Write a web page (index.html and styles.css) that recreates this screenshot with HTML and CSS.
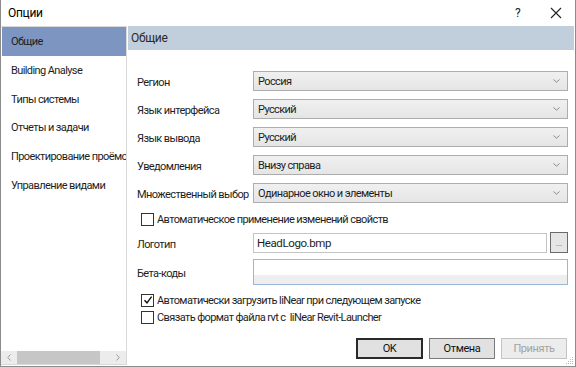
FILE: index.html
```html
<!DOCTYPE html>
<html lang="ru">
<head>
<meta charset="utf-8">
<title>Опции</title>
<link rel="stylesheet" href="styles.css">
</head>
<body>
<div class="window">
  <div class="titlebar">
    <span class="title">Опции</span>
    <span class="help">?</span>
    <span class="close"><svg width="12" height="12" viewBox="0 0 12 12"><path d="M1 1L11 11M11 1L1 11" stroke="#222" stroke-width="1.1" fill="none"/></svg></span>
  </div>
  <div class="main">
    <div class="nav">
      <ul class="nav-list">
        <li class="nav-item active">Общие</li>
        <li class="nav-item">Building Analyse</li>
        <li class="nav-item">Типы системы</li>
        <li class="nav-item">Отчеты и задачи</li>
        <li class="nav-item">Проектирование проёмов</li>
        <li class="nav-item">Управление видами</li>
      </ul>
      <div class="hscroll">
        <span class="sarrow"><svg width="4" height="7" viewBox="0 0 4 7"><path d="M3.5 0.5L0.8 3.5L3.5 6.5" stroke="#9a9a9a" fill="none"/></svg></span>
        <div class="track"><div class="thumb"></div></div>
        <span class="sarrow"><svg width="4" height="7" viewBox="0 0 4 7"><path d="M0.5 0.5L3.2 3.5L0.5 6.5" stroke="#9a9a9a" fill="none"/></svg></span>
      </div>
    </div>
    <div class="content">
      <div class="header">Общие</div>
      <div class="form">
        <div class="row">
          <span class="label">Регион</span>
          <div class="select"><span>Россия</span><svg class="chev" width="7" height="4" viewBox="0 0 7 4"><path d="M0.5 0.5L3.5 3.2L6.5 0.5" stroke="#8a8a8a" fill="none"/></svg></div>
        </div>
        <div class="row">
          <span class="label">Язык интерфейса</span>
          <div class="select"><span>Русский</span><svg class="chev" width="7" height="4" viewBox="0 0 7 4"><path d="M0.5 0.5L3.5 3.2L6.5 0.5" stroke="#8a8a8a" fill="none"/></svg></div>
        </div>
        <div class="row">
          <span class="label">Язык вывода</span>
          <div class="select"><span>Русский</span><svg class="chev" width="7" height="4" viewBox="0 0 7 4"><path d="M0.5 0.5L3.5 3.2L6.5 0.5" stroke="#8a8a8a" fill="none"/></svg></div>
        </div>
        <div class="row">
          <span class="label">Уведомления</span>
          <div class="select"><span>Внизу справа</span><svg class="chev" width="7" height="4" viewBox="0 0 7 4"><path d="M0.5 0.5L3.5 3.2L6.5 0.5" stroke="#8a8a8a" fill="none"/></svg></div>
        </div>
        <div class="row">
          <span class="label">Множественный выбор</span>
          <div class="select"><span>Одинарное окно и элементы</span><svg class="chev" width="7" height="4" viewBox="0 0 7 4"><path d="M0.5 0.5L3.5 3.2L6.5 0.5" stroke="#8a8a8a" fill="none"/></svg></div>
        </div>
        <label class="check first-check"><span class="box"></span>Автоматическое применение изменений свойств</label>
        <div class="row logo-row">
          <span class="label">Логотип</span>
          <div class="textbox">HeadLogo.bmp</div>
          <div class="browse">...</div>
        </div>
        <div class="row beta-row">
          <span class="label">Бета-коды</span>
          <div class="memo"><div class="memo-bar"></div></div>
        </div>
        <label class="check check-a"><span class="box"><svg width="10" height="10" viewBox="0 0 10 10"><path d="M1.5 5.2L4 7.8L8.6 1.6" stroke="#111" stroke-width="1.4" fill="none"/></svg></span>Автоматически загрузить liNear при следующем запуске</label>
        <label class="check check-b"><span class="box"></span>Связать формат файла rvt с&nbsp; liNear Revit-Launcher</label>
      </div>
      <div class="footer">
        <button class="btn default">OK</button>
        <button class="btn">Отмена</button>
        <button class="btn disabled">Принять</button>
      </div>
      <svg class="grip" width="9" height="9" viewBox="0 0 9 9"><g fill="#b8b8b8"><rect x="7" y="1" width="1" height="1"/><rect x="5" y="3" width="1" height="1"/><rect x="7" y="3" width="1" height="1"/><rect x="3" y="5" width="1" height="1"/><rect x="5" y="5" width="1" height="1"/><rect x="7" y="5" width="1" height="1"/><rect x="1" y="7" width="1" height="1"/><rect x="3" y="7" width="1" height="1"/><rect x="5" y="7" width="1" height="1"/><rect x="7" y="7" width="1" height="1"/></g></svg>
    </div>
  </div>
</div>
</body>
</html>
```

FILE: styles.css
```css
* { box-sizing: border-box; }
html, body { margin: 0; padding: 0; background: #fff; }
body {
  font-family: Roboto, "Noto Sans", sans-serif;
  font-size: 11px;
  letter-spacing: -0.6px;
  color: #1e1e1e;
}
.window {
  width: 576px;
  height: 367px;
  border: 1px solid #8c8c8c;
  border-top: none;
  display: flex;
  flex-direction: column;
  background: #fff;
}
.titlebar {
  height: 26px;
  display: flex;
  align-items: center;
  padding-left: 7px;
  flex: none;
}
.title { font-size: 12px; letter-spacing: -0.3px; color: #000; flex: 1; }
.help { width: 12px; font-size: 12px; color: #222; margin-right: 23px; }
.close { width: 12px; height: 12px; margin-right: 13px; display: flex; }
.main { flex: 1; display: flex; min-height: 0; }
.nav {
  width: 126px;
  flex: none;
  border: 1px solid #d9d9d9;
  border-left: none;
  display: flex;
  flex-direction: column;
  overflow: hidden;
  margin-bottom: 1px;
}
.nav-list { list-style: none; margin: 0; padding: 0 0 0 1px; flex: 1; }
.nav-item {
  height: 28.8px;
  line-height: 29px;
  padding-left: 9px;
  white-space: nowrap;
  overflow: hidden;
  color: #1e1e1e;
}
.nav-item.active { background: #7d95c1; }
.hscroll {
  height: 13px;
  background: #ececec;
  display: flex;
  align-items: center;
  flex: none;
}
.sarrow { width: 16px; display: flex; justify-content: center; }
.track { flex: 1; height: 13px; display: flex; align-items: stretch; padding-right: 8px; }
.thumb { width: 83px; background: #c6c6c6; }
.content { flex: 1; display: flex; flex-direction: column; position: relative; min-width: 0; }
.header {
  height: 24px;
  margin: 0 1px 0 1px;
  background: #c1cedb;
  line-height: 24px;
  padding-left: 3px;
  font-size: 12px;
  letter-spacing: -0.3px;
  color: #2a2a2a;
}
.form { flex: 1; padding: 21px 7px 0 10px; display: flex; flex-direction: column; }
.row { display: flex; align-items: center; height: 20px; margin-bottom: 8px; }
.label { width: 116px; flex: none; padding-top: 3px; white-space: nowrap; }
.select {
  flex: 1;
  height: 20px;
  border: 1px solid #adadad;
  background: linear-gradient(#f0f0f0, #e5e5e5);
  display: flex;
  align-items: center;
  padding: 0 7px 0 4px;
}
.select span { flex: 1; }
.chev { flex: none; }
.check { display: flex; align-items: center; height: 16px; padding-left: 4px; }
.box {
  width: 13px; height: 13px;
  border: 1px solid #333;
  background: #fff;
  margin-right: 3px;
  display: flex; align-items: center; justify-content: center;
  flex: none;
}
.first-check { margin-top: 0; margin-bottom: 5px; }
.logo-row { height: 21px; margin-bottom: 6px; }
.textbox {
  flex: 1;
  height: 20px;
  border: 1px solid #c4c4c4;
  padding-left: 3px;
  line-height: 18px;
  font-size: 11.5px;
  letter-spacing: -0.4px;
}
.browse {
  width: 18px; height: 21px;
  margin-left: 3px;
  border: 1px solid #6a6a6a;
  background: #e6e6e6;
  font-size: 8px;
  line-height: 22px;
  letter-spacing: 0;
  text-align: center;
  color: #7a4a4a;
}
.beta-row { height: 26px; margin-bottom: 7px; }
.memo {
  flex: 1; height: 26px;
  border: 1px solid #98b7d9;
  display: flex; flex-direction: column; justify-content: flex-end;
}
.memo-bar { height: 9px; background: #eeeeee; }
.check-a { margin-bottom: 1px; }
.footer { display: flex; justify-content: flex-end; gap: 6px; padding: 0 8px 7px 0; }
.btn {
  font-family: inherit;
  font-size: 11px;
  letter-spacing: -0.4px;
  width: 66px; height: 21px;
  border: 1px solid #7a7a7a;
  background: #e1e1e1;
  color: #111;
  padding: 0;
}
.btn.default { width: 67px; border: 2px solid #2a2a2a; }
.btn.disabled { border-color: #c4c4c4; background: #ececec; color: #a3a3a3; }
.grip { position: absolute; right: 1px; bottom: 1px; }
```
